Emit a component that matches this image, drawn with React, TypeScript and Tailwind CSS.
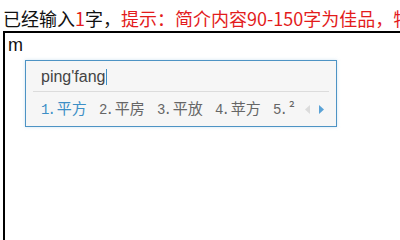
const candidates = ["平方", "平房", "平放", "苹方", "²"];

function Candidate({ index, word, active }: { index: number; word: string; active: boolean }) {
  return (
    <div className={`flex w-[58px] shrink-0 items-baseline ${active ? "text-[#3d8fc6]" : "text-[#666]"}`}>
      <span className="text-[14px] font-['Liberation_Mono',monospace] tracking-[-2px]">{index}.</span>
      <span className="ml-[3px] text-[15px] font-['Noto_Sans_CJK_SC',sans-serif]">{word}</span>
    </div>
  );
}

export default function App() {
  return (
    <div className="relative h-[240px] w-[400px] overflow-hidden bg-white">
      <div className="h-[31px] whitespace-nowrap pl-[3px] pt-[6px] text-[18px] leading-[24px] font-['Noto_Sans_CJK_SC',sans-serif]">
        <span className="text-[#111]">已经输入</span>
        <span className="text-[#e31c1c]">1</span>
        <span className="text-[#111]">字，</span>
        <span className="text-[#e31c1c]">提示：简介内容90-150字为佳品，特</span>
      </div>

      <div className="ml-[3px] h-[260px] w-[420px] border-2 border-black px-[3px]">
        <div className="text-[18px] leading-[22px] pt-[1px] text-[#111] font-['Liberation_Sans',sans-serif]">m</div>
      </div>

      {/* IME candidate box */}
      <div className="absolute left-[25px] top-[60px] h-[67px] w-[312px] border border-[#4d93c4] bg-[#f6f6f6] shadow-[0_0_3px_rgba(160,200,230,0.5)]">
        <div className="flex h-[30px] items-center pl-[15px] pt-[2px] text-[16px] text-[#444] font-['Liberation_Sans',sans-serif]">
          ping'fang
          <span className="ml-[1px] inline-block h-[16px] w-px bg-[#3d8fc6]" />
        </div>
        <div className="mx-[7px] h-px bg-[#dcdcdc]" />
        <div className="flex h-[34px] items-center pl-[15px]">
          <div className="flex min-w-0 flex-1 overflow-hidden">
            {candidates.map((w, i) => (
              <Candidate key={i} index={i + 1} word={w} active={i === 0} />
            ))}
          </div>
          <div className="mr-[12px] flex shrink-0 items-center gap-[9px]">
            <svg width="5" height="9" viewBox="0 0 5 9">
              <path d="M5 0 L0 4.5 L5 9 Z" fill="#dcdcdc" />
            </svg>
            <svg width="5" height="9" viewBox="0 0 5 9">
              <path d="M0 0 L5 4.5 L0 9 Z" fill="#5aa2d6" />
            </svg>
          </div>
        </div>
      </div>
    </div>
  );
}
